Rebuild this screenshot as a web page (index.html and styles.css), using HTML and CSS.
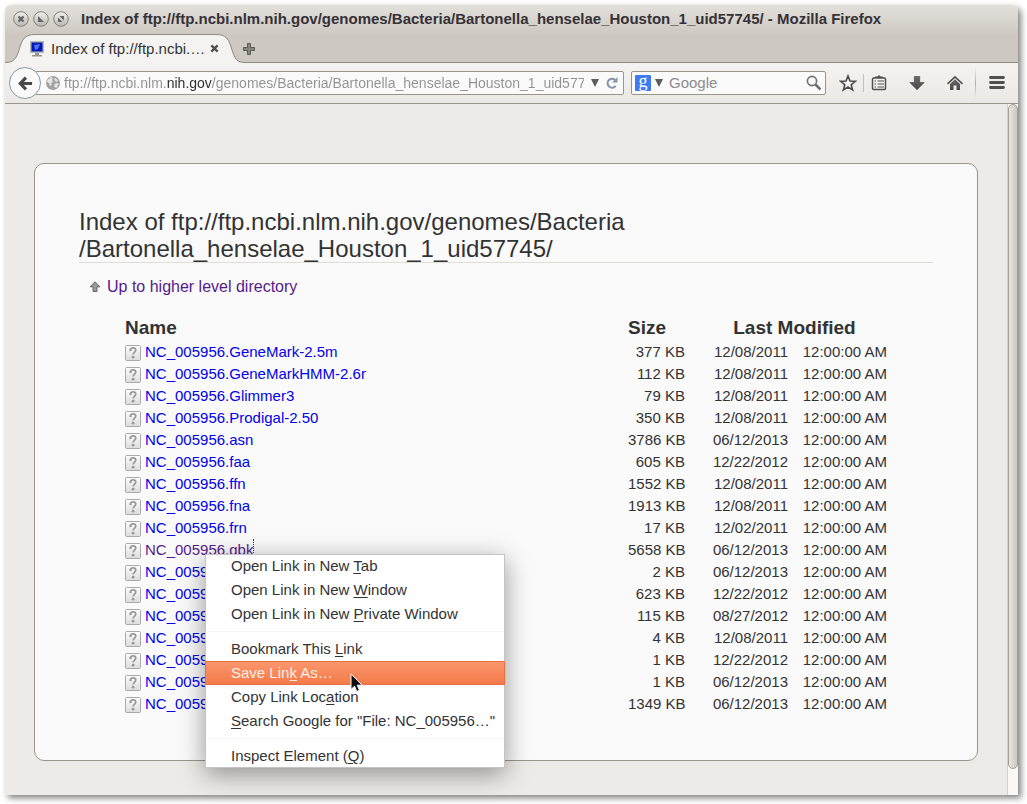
FILE: index.html
```html
<!DOCTYPE html>
<html lang="en">
<head>
<meta charset="utf-8">
<title>Index of ftp://ftp.ncbi.nlm.nih.gov/genomes/Bacteria/Bartonella_henselae_Houston_1_uid57745/</title>
<link rel="stylesheet" href="styles.css">
</head>
<body>
<svg class="defs" aria-hidden="true">
  <defs>
    <linearGradient id="metal" x1="0" y1="0" x2="0" y2="1"><stop offset="0" stop-color="#f1f0ee"/><stop offset="1" stop-color="#bab7b2"/></linearGradient>
    <linearGradient id="dark" x1="0" y1="0" x2="0" y2="1"><stop offset="0" stop-color="#686868"/><stop offset="1" stop-color="#4a4a4a"/></linearGradient>
    <linearGradient id="page" x1="0" y1="0" x2="0" y2="1"><stop offset="0" stop-color="#fdfdfd"/><stop offset="1" stop-color="#dcdcdc"/></linearGradient>
    <symbol id="file" viewBox="0 0 16 16">
      <rect x=".5" y=".5" width="15" height="15" rx="1" fill="url(#page)" stroke="#a9a9a9"/>
      <path d="M5.3 5.4C5.3 3.6 6.5 2.8 8 2.8s2.8.8 2.8 2.3c0 1.900-2.600 2.100-2.600 4.400" fill="none" stroke="#999" stroke-width="1.700"/>
      <circle cx="5.600" cy="5.200" r="1.100" fill="#999"/><circle cx="8.100" cy="12.200" r="1.400" fill="#999"/>
    </symbol>
  </defs>
</svg>
<div class="window">
  <header class="titlebar">
    <button class="wm" aria-label="Close"><svg viewBox="0 0 16 16"><circle cx="8" cy="8" r="7.300" fill="url(#metal)" stroke="#858078"/><path d="M5.500 5.500l5 5M10.500 5.500l-5 5" stroke="#606060" stroke-width="2.200"/></svg></button>
    <button class="wm" aria-label="Minimize"><svg viewBox="0 0 16 16"><circle cx="8" cy="8" r="7.300" fill="url(#metal)" stroke="#858078"/><path d="M5 5v6h6z" fill="#666"/></svg></button>
    <button class="wm" aria-label="Maximize"><svg viewBox="0 0 16 16"><circle cx="8" cy="8" r="7.300" fill="url(#metal)" stroke="#858078"/><path d="M6.500 5H11v4.500zM5 6.500V11h4.500z" fill="#666"/></svg></button>
    <h1 class="window-title">Index of ftp://ftp.ncbi.nlm.nih.gov/genomes/Bacteria/Bartonella_henselae_Houston_1_uid57745/ - Mozilla Firefox</h1>
  </header>

  <nav class="tabs">
    <div class="tab">
      <svg class="tab-shape" viewBox="0 0 240 29" aria-hidden="true"><path d="M0 29V28.500C9 28.500 11 25 14 16C17 5 20 .5 30 .5H211C221 .5 224 5 227 16C230 25 232 28.500 240 28.500V29z" fill="#f4f3f1"/><path d="M0 28.500C9 28.500 11 25 14 16C17 5 20 .5 30 .5H211C221 .5 224 5 227 16C230 25 232 28.500 240 28.500" fill="none" stroke="#8f8b80"/></svg>
      <svg class="favicon" viewBox="0 0 16 16" aria-hidden="true"><rect x="1" y="0" width="14" height="12" fill="#b9b9b4"/><rect x="2.500" y="1.500" width="11" height="9" fill="#0018b8"/><path d="M5 4l6-1-2 5-3 1z" fill="#4d74ee"/><path d="M6 12h4v2h3v1.500H3V14h3z" fill="#96968f"/></svg>
      <span class="tab-title">Index of ftp://ftp.ncbi.…</span>
      <button class="tab-close" aria-label="Close tab"><svg viewBox="0 0 10 10"><path d="M1.500 1.500l7 7M8.500 1.500l-7 7" stroke="#505050" stroke-width="2.600"/></svg></button>
    </div>
    <button class="new-tab" aria-label="New tab"><svg viewBox="0 0 12 12"><path d="M4.500.5h3v4h4v3h-4v4h-3v-4h-4v-3h4z" fill="#88857f" stroke="#5d5a55"/></svg></button>
  </nav>

  <div class="toolbar">
    <button class="back" aria-label="Back"><svg viewBox="0 0 16 16"><path d="M8.500 1.800L2.500 8l6 6.200M3 8h12" fill="none" stroke="#484848" stroke-width="3.400"/></svg></button>
    <div class="field urlbar">
      <svg class="globe" viewBox="0 0 14 14" aria-hidden="true"><circle cx="7" cy="7" r="7" fill="#a2a2a2"/><path d="M1.500 4L5 1l2 1-1 2 1 2-2 1 1 2-2 1-1-3-2-1zM9 2l3 2-1 2-2-1-1-2zM8.500 8l3-1 1 1-2 4-2-1z" fill="#e6e6e6"/></svg>
      <input class="url" type="text" aria-label="Address" value="ftp://ftp.ncbi.nlm.nih.gov/genomes/Bacteria/Bartonella_henselae_Houston_1_uid57745/">
      <button class="plain drop" aria-label="Show history"><svg viewBox="0 0 8 8"><path d="M0 0h8L4 8z" fill="#5c5c5c"/></svg></button>
      <button class="plain reload" aria-label="Reload"><svg viewBox="0 0 12 12"><path d="M9.700 8.800A4.500 4.500 0 1 1 9 2.800" fill="none" stroke="#8496a9" stroke-width="2"/><path d="M11.500 0v5.500H6z" fill="#8496a9"/></svg></button>
    </div>
    <div class="field search">
      <button class="plain google" aria-label="Search engine">g</button>
      <button class="plain drop" aria-label="Choose engine"><svg viewBox="0 0 8 8"><path d="M0 0h8L4 8z" fill="#5c5c5c"/></svg></button>
      <input class="query" type="text" aria-label="Search" placeholder="Google">
      <button class="plain lens" aria-label="Go"><svg viewBox="0 0 16 16"><circle cx="6" cy="6" r="4.600" fill="none" stroke="#707070" stroke-width="1.600"/><path d="M9.500 9.500l5 5" stroke="#707070" stroke-width="2.500"/></svg></button>
    </div>
    <div class="tools">
      <button class="plain tool" aria-label="Bookmark"><svg viewBox="0 0 18 18"><path d="M9 2l2 5 5.300.3-4.100 3.400 1.400 5.200L9 13l-4.600 2.900 1.400-5.200L1.700 7.300 7 7z" fill="#f6f5f4" stroke="#505050" stroke-width="1.700"/></svg></button>
      <span class="rule"></span>
      <button class="plain tool" aria-label="Bookmarks list"><svg viewBox="0 0 18 18"><path d="M5 4V2.500h2.500L9 1l1.500 1.500H13V4z" fill="#505050"/><rect x="2.500" y="4" width="13" height="11.500" rx="1.200" fill="#f2f1ef" stroke="#505050" stroke-width="1.500"/><path d="M4.500 7h1.500M7.500 7h6.500M4.500 10h1.500M7.500 10h6.500M4.500 13h1.500M7.500 13h6.500" stroke="#505050" stroke-width="1"/></svg></button>
      <button class="plain tool" aria-label="Downloads"><svg viewBox="0 0 18 18"><path d="M6.300 2.500h5.400v6h4.500L9 15.800 1.800 8.500h4.500z" fill="url(#dark)" stroke="#444" stroke-width=".6"/></svg></button>
      <button class="plain tool" aria-label="Home"><svg viewBox="0 0 18 18"><path d="M1.500 9.800L9 2.800l7.500 7" fill="none" stroke="#505050" stroke-width="1.600"/><path d="M9 5.300l5 4.700v6h-3.500v-4.500h-3V16H4v-6z" fill="url(#dark)"/></svg></button>
      <span class="rule tall"></span>
      <button class="plain tool" aria-label="Menu"><svg viewBox="0 0 18 18"><path d="M2.500 3.500h13M2.500 8.500h13M2.500 13.500h13" stroke="#505050" stroke-width="2.800" stroke-linecap="round"/></svg></button>
    </div>
  </div>

  <div class="viewport">
    <main class="content">
      <section class="card">
        <h2 class="heading">Index of ftp://ftp.ncbi.nlm.nih.gov/genomes/Bacteria<wbr>/Bartonella_henselae_Houston_1_uid57745/</h2>
        <p class="up"><a class="visited" href="#up"><svg viewBox="0 0 12 12" aria-hidden="true"><path d="M6 .8l5 5H8v4.700H4V5.800H1z" fill="#999" stroke="#606060" stroke-width=".9"/></svg>Up to higher level directory</a></p>
        <table class="listing">
          <colgroup><col><col class="c-size"><col class="c-date"><col class="c-time"></colgroup>
          <thead><tr><th>Name</th><th>Size</th><th class="modified" colspan="2">Last Modified</th></tr></thead>
          <tbody>
            <tr><td><a href="#f1"><svg><use href="#file"/></svg>NC_005956.GeneMark-2.5m</a></td><td>377 KB</td><td>12/08/2011</td><td>12:00:00 AM</td></tr>
            <tr><td><a href="#f2"><svg><use href="#file"/></svg>NC_005956.GeneMarkHMM-2.6r</a></td><td>112 KB</td><td>12/08/2011</td><td>12:00:00 AM</td></tr>
            <tr><td><a href="#f3"><svg><use href="#file"/></svg>NC_005956.Glimmer3</a></td><td>79 KB</td><td>12/08/2011</td><td>12:00:00 AM</td></tr>
            <tr><td><a href="#f4"><svg><use href="#file"/></svg>NC_005956.Prodigal-2.50</a></td><td>350 KB</td><td>12/08/2011</td><td>12:00:00 AM</td></tr>
            <tr><td><a href="#f5"><svg><use href="#file"/></svg>NC_005956.asn</a></td><td>3786 KB</td><td>06/12/2013</td><td>12:00:00 AM</td></tr>
            <tr><td><a href="#f6"><svg><use href="#file"/></svg>NC_005956.faa</a></td><td>605 KB</td><td>12/22/2012</td><td>12:00:00 AM</td></tr>
            <tr><td><a href="#f7"><svg><use href="#file"/></svg>NC_005956.ffn</a></td><td>1552 KB</td><td>12/08/2011</td><td>12:00:00 AM</td></tr>
            <tr><td><a href="#f8"><svg><use href="#file"/></svg>NC_005956.fna</a></td><td>1913 KB</td><td>12/08/2011</td><td>12:00:00 AM</td></tr>
            <tr><td><a href="#f9"><svg><use href="#file"/></svg>NC_005956.frn</a></td><td>17 KB</td><td>12/02/2011</td><td>12:00:00 AM</td></tr>
            <tr><td><a class="visited focused" href="#f10"><svg><use href="#file"/></svg>NC_005956.gbk</a></td><td>5658 KB</td><td>06/12/2013</td><td>12:00:00 AM</td></tr>
            <tr><td><a href="#f11"><svg><use href="#file"/></svg>NC_005956</a></td><td>2 KB</td><td>06/12/2013</td><td>12:00:00 AM</td></tr>
            <tr><td><a href="#f12"><svg><use href="#file"/></svg>NC_005956</a></td><td>623 KB</td><td>12/22/2012</td><td>12:00:00 AM</td></tr>
            <tr><td><a href="#f13"><svg><use href="#file"/></svg>NC_005956</a></td><td>115 KB</td><td>08/27/2012</td><td>12:00:00 AM</td></tr>
            <tr><td><a href="#f14"><svg><use href="#file"/></svg>NC_005956</a></td><td>4 KB</td><td>12/08/2011</td><td>12:00:00 AM</td></tr>
            <tr><td><a href="#f15"><svg><use href="#file"/></svg>NC_005956</a></td><td>1 KB</td><td>12/22/2012</td><td>12:00:00 AM</td></tr>
            <tr><td><a href="#f16"><svg><use href="#file"/></svg>NC_005956</a></td><td>1 KB</td><td>06/12/2013</td><td>12:00:00 AM</td></tr>
            <tr><td><a href="#f17"><svg><use href="#file"/></svg>NC_005956</a></td><td>1349 KB</td><td>06/12/2013</td><td>12:00:00 AM</td></tr>
          </tbody>
        </table>
      </section>
    </main>
    <div class="scrollbar"><div class="thumb"></div></div>
  </div>

  <div class="menu" role="menu">
    <button role="menuitem">Open Link in New <u>T</u>ab</button>
    <button role="menuitem">Open Link in New <u>W</u>indow</button>
    <button role="menuitem">Open Link in New <u>P</u>rivate Window</button>
    <hr>
    <button role="menuitem">Bookmark This <u>L</u>ink</button>
    <button role="menuitem" class="active">Save Lin<u>k</u> As…</button>
    <button role="menuitem">Copy Link Loc<u>a</u>tion</button>
    <button role="menuitem"><u>S</u>earch Google for "File: NC_005956…"</button>
    <hr>
    <button role="menuitem">Inspect Element (<u>Q</u>)</button>
    <svg class="pointer" viewBox="0 0 14 20" aria-hidden="true"><path d="M1 1v15.500l3.500-3.300 2.300 5.300 2.700-1.200-2.300-5.100h5z" fill="#111" stroke="#fff"/></svg>
  </div>
</div>
</body>
</html>
```

FILE: styles.css
```css
* { box-sizing: border-box; }

body {
  margin: 0;
  padding: 5px 9px 9px 5px;
  background: #fff;
  color: #333;
  font: 15px/22px "Liberation Sans", Arial, sans-serif;
}

svg { display: block; }
.defs { position: absolute; width: 0; height: 0; }
a { color: #0000ee; text-decoration: none; }
button { font: inherit; color: inherit; border: 0; padding: 0; background: none; }

.window {
  position: relative;
  display: flex;
  flex-direction: column;
  min-height: calc(100vh - 14px);
  border-radius: 6px 6px 0 0;
  background: linear-gradient(#e3e0dc, #cdc8c1 30px, #cdc8c1);
  box-shadow: 3px 3px 6px rgba(0, 0, 0, .5);
}

/* Title bar */
.titlebar {
  display: flex;
  align-items: center;
  height: 29px;
  padding: 0 0 2px 8px;
  gap: 4px;
}
.wm { width: 16px; height: 16px; }
.window-title {
  margin: 0 0 0 8px;
  font-size: 15px;
  line-height: 22px;
  color: #353137;
  white-space: nowrap;
}

/* Tab strip */
.tabs {
  display: flex;
  align-items: center;
  height: 29px;
  box-shadow: inset 0 -1px #8f8b80;
}
.tab {
  position: relative;
  display: flex;
  align-items: center;
  width: 238px;
  height: 29px;
  padding: 0 23px 0 24px;
}
.tab-shape { position: absolute; left: 0; top: 0; width: 240px; height: 29px; }
.favicon { position: relative; width: 16px; height: 16px; margin-right: 6px; }
.tab-title { position: relative; flex: 1; white-space: nowrap; }
.tab-close { position: relative; width: 10px; height: 10px; }
.tab-close svg { width: 9px; height: 9px; }
.new-tab { position: relative; width: 12px; height: 12px; }

/* Navigation toolbar */
.toolbar {
  display: flex;
  align-items: center;
  height: 41px;
  padding: 0 12px 0 4px;
  background: linear-gradient(#f4f3f1, #ebe9e6);
  border-bottom: 1px solid #9b968c;
}
.back {
  z-index: 1;
  display: grid;
  place-items: center;
  width: 32px;
  height: 32px;
  border: 1px solid #8798a8;
  border-radius: 50%;
  background: #fafafa;
}
.back svg { width: 15px; height: 15px; }
.field {
  display: flex;
  align-items: center;
  height: 24px;
  border: 1px solid #9b9488;
  border-radius: 2px;
  background: #fafafa;
}
.field input {
  flex: 1;
  min-width: 0;
  padding: 0;
  border: 0;
  outline: 0;
  background: none;
  font: inherit;
}
.urlbar { flex: 1; margin-left: -6px; padding: 0 5px 0 10px; font-size: 14px; }
.globe { width: 14px; height: 14px; margin-right: 4px; }
.field .url {
  color: transparent;
  background: linear-gradient(to right, #929292 103px, #2c2c2c 103px 148px, #929292 148px);
  -webkit-background-clip: text;
  background-clip: text;
}
.plain { display: grid; place-items: center; }
.drop { width: 8px; margin-left: 7px; }
.drop svg { width: 8px; height: 8px; }
.reload { width: 12px; margin-left: 7px; }
.reload svg { width: 12px; height: 12px; }
.search { width: 195px; margin-left: 7px; padding: 0 3px; }
.google {
  width: 16px;
  height: 16px;
  padding-bottom: 4px;
  border-radius: 1px;
  background: #3f7af5;
  color: #fff;
  font: 18px/12px "Liberation Serif", serif;
}
.search .drop { margin-left: 4px; margin-right: 6px; }
.query::placeholder { color: #8c8c8c; opacity: 1; }
.lens svg { width: 16px; height: 16px; }
.tools { display: flex; align-items: center; margin-left: 13px; }
.tool { width: 18px; height: 18px; }
.tool svg { width: 18px; height: 18px; }
.tool + .tool { margin-left: 20px; }
.rule { width: 1px; height: 18px; margin: 0 6px; background: #bcc2c8; }
.rule.tall {
  height: 32px;
  margin: 0 12px 0 11px;
  background: linear-gradient(transparent, #a4adb5, transparent);
}

/* Page */
.viewport { flex: 1; display: flex; background: #edebe7; }
.content { flex: 1; padding: 59px 29px 34px; }
.card {
  padding: 44px 44px 45px;
  border: 1px solid #9b968c;
  border-radius: 10px;
  background: #fafafa;
}
.heading {
  margin: 0;
  border-bottom: 1px solid #e0dcd6;
  font-size: 24px;
  font-weight: normal;
  line-height: 27px;
}
.up { margin: 13px 0 18px 10px; font-size: 16px; }
.up a { display: flex; align-items: center; gap: 6px; }
.up svg { width: 12px; height: 12px; }
.visited { color: #551a8b; }
.listing {
  width: calc(100% - 92px);
  margin: 0 46px;
  table-layout: fixed;
  border-collapse: collapse;
}
.c-size { width: 57px; }
.c-date { width: 103px; }
.c-time { width: 99px; }
.listing th { padding: 0 0 1px; height: 25px; font-size: 19px; text-align: left; }
.listing th.modified { padding-left: 17px; text-align: center; }
.listing td { padding: 0; text-align: right; white-space: nowrap; }
.listing td:first-child { text-align: left; }
.listing td a { display: inline-flex; align-items: center; height: 22px; vertical-align: top; gap: 4px; }
.listing td svg { width: 16px; height: 16px; margin-top: 2px; }
.focused { border-right: 1px dotted #551a8b; }

.scrollbar {
  width: 11px;
  border-left: 1px solid #d5d1cb;
  background: #f9f8f7;
}
.thumb {
  height: calc(100% - 26px);
  border: 1px solid #a39e95;
  border-radius: 6px;
  background: linear-gradient(to right, #e9e7e3, #cbc6bf);
}

/* Context menu */
.menu {
  position: absolute;
  left: 200px;
  top: 549px;
  width: 300px;
  background: #fff;
  box-shadow: inset 0 0 0 1px #c4c4c4, 0 6px 24px rgba(0, 0, 0, .4);
}
.menu button {
  display: block;
  width: 100%;
  height: 24px;
  padding-left: 26px;
  text-align: left;
  line-height: 24px;
  white-space: nowrap;
}
.menu u { text-underline-offset: 2px; }
.menu hr { height: 1px; margin: 5px 1px; border: 0; background: #f6f6f6; }
.menu .active {
  border: 1px solid #e8703f;
  background: linear-gradient(#fb966d, #f37b4a);
  color: #fdeee6;
  padding-left: 25px;
  line-height: 22px;
}
.pointer { position: absolute; left: 145px; top: 119px; width: 14px; height: 20px; }
```
